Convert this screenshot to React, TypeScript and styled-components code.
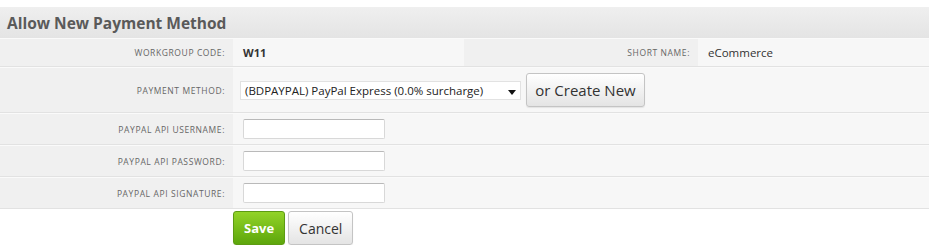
import React from "react";
import styled, { createGlobalStyle } from "styled-components";

const GlobalStyle = createGlobalStyle`
  body {
    margin: 0;
    background: #fff;
    font-family: "Open Sans", "DejaVu Sans", sans-serif;
  }
`;

const Page = styled.div`
  padding-top: 7px;
  width: 929px;
`;

const Header = styled.div`
  height: 31px;
  background: linear-gradient(#efefef, #e4e4e4);
  display: flex;
  align-items: center;
  padding-left: 7px;
  font-size: 15.5px;
  font-weight: 700;
  color: #5a5a5a;
`;

const Row = styled.div<{ $height: number }>`
  display: flex;
  height: ${p => p.$height}px;
  border-bottom: 1px solid #e2e2e2;
  border-top: 1px solid #fafafa;
`;

const LabelCell = styled.div<{ $width?: number }>`
  ${p => (p.$width ? `width: ${p.$width}px;` : "flex: 1;")}
  flex-shrink: 0;
  background: #f0f0f0;
  display: flex;
  align-items: center;
  justify-content: flex-end;
  padding-right: 8px;
  box-sizing: border-box;
  font-size: 8.5px;
  letter-spacing: 0.6px;
  color: #666;
  text-transform: uppercase;
`;

const ValueCell = styled.div<{ $width?: number }>`
  ${p => (p.$width ? `width: ${p.$width}px;` : "flex: 1;")}
  flex-shrink: 0;
  background: #f7f7f7;
  display: flex;
  align-items: center;
  gap: 5px;
  padding-left: 10px;
  box-sizing: border-box;
  font-size: 12px;
  color: #333;
`;

const Strong = styled.span`
  font-weight: 700;
  font-size: 11px;
  color: #333;
`;

const Plain = styled.span`
  font-size: 11.5px;
  color: #333;
`;

const SelectBox = styled.div`
  width: 281px;
  height: 19px;
  box-sizing: border-box;
  background: #fff;
  border: 1px solid #e2e2e2;
  display: flex;
  align-items: center;
  justify-content: space-between;
  padding: 0 4px 0 4px;
  font-size: 11.5px;
  color: #222;
  margin-left: -3px;
`;

const Arrow = styled.svg`
  width: 8px;
  height: 5px;
  margin-top: 4px;
`;

const Button = styled.button<{ $primary?: boolean }>`
  font-family: "Open Sans", "DejaVu Sans", sans-serif;
  height: 34px;
  padding: 0 10px;
  border-radius: 3px;
  cursor: pointer;
  border: 1px solid ${p => (p.$primary ? "#5d9b12" : "#c4c4c4")};
  background: ${p =>
    p.$primary
      ? "linear-gradient(#92d327, #5da60c)"
      : "linear-gradient(#ffffff, #e4e4e4)"};
  color: ${p => (p.$primary ? "#fff" : "#333")};
  font-weight: ${p => (p.$primary ? 700 : 400)};
  font-size: ${p => (p.$primary ? "13px" : "14px")};
  box-shadow: 0 1px 1px rgba(0, 0, 0, 0.08);
`;

const CreateButton = styled(Button)`
  width: 119px;
  font-size: 15px;
  padding: 0;
`;

const TextInput = styled.input`
  width: 142px;
  height: 20px;
  box-sizing: border-box;
  border: 1px solid #d8d8d8;
  border-top-color: #b9b9b9;
  border-radius: 2px;
  background: #fff;
`;

const Actions = styled.div`
  display: flex;
  gap: 3px;
  padding: 2px 0 0 233px;
`;

const fields = ["PayPal API Username:", "PayPal API Password:", "PayPal API Signature:"];

export default function App() {
  return (
    <Page>
      <GlobalStyle />
      <Header>Allow New Payment Method</Header>
      <Row $height={27}>
        <LabelCell $width={233}>Workgroup Code:</LabelCell>
        <ValueCell $width={231}>
          <Strong>W11</Strong>
        </ValueCell>
        <LabelCell $width={234}>Short Name:</LabelCell>
        <ValueCell>
          <Plain>eCommerce</Plain>
        </ValueCell>
      </Row>
      <Row $height={44}>
        <LabelCell $width={233}>Payment Method:</LabelCell>
        <ValueCell>
          <SelectBox>
            <span>(BDPAYPAL) PayPal Express (0.0% surcharge)</span>
            <Arrow viewBox="0 0 8 5">
              <path d="M0 0h8L4 5z" fill="#111" />
            </Arrow>
          </SelectBox>
          <CreateButton>or Create New</CreateButton>
        </ValueCell>
      </Row>
      {fields.map(f => (
        <Row key={f} $height={30}>
          <LabelCell $width={233}>{f}</LabelCell>
          <ValueCell>
            <TextInput type="text" />
          </ValueCell>
        </Row>
      ))}
      <Actions>
        <Button $primary>Save</Button>
        <Button>Cancel</Button>
      </Actions>
    </Page>
  );
}
